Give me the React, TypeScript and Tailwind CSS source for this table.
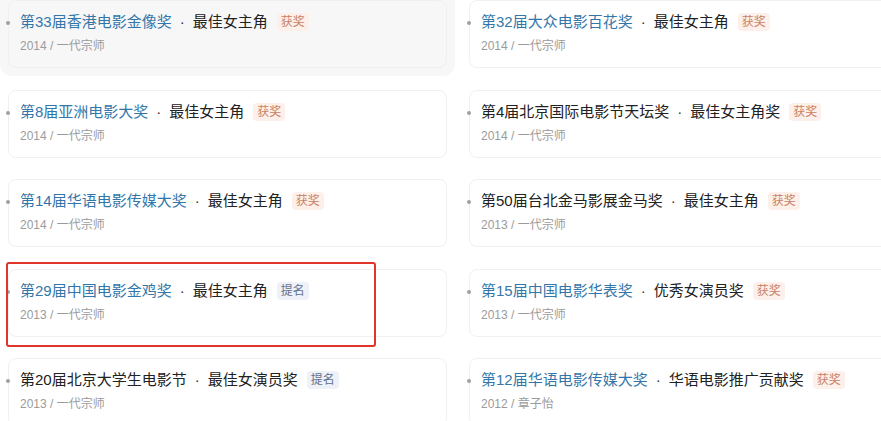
import React from 'react';

type Award = {
  fest: string;
  link: boolean;
  prize: string;
  status: '获奖' | '提名';
  meta: string;
};

const AWARDS: Award[] = [
  { fest: '第33届香港电影金像奖', link: true, prize: '最佳女主角', status: '获奖', meta: '2014 / 一代宗师' },
  { fest: '第32届大众电影百花奖', link: true, prize: '最佳女主角', status: '获奖', meta: '2014 / 一代宗师' },
  { fest: '第8届亚洲电影大奖', link: true, prize: '最佳女主角', status: '获奖', meta: '2014 / 一代宗师' },
  { fest: '第4届北京国际电影节天坛奖', link: false, prize: '最佳女主角奖', status: '获奖', meta: '2014 / 一代宗师' },
  { fest: '第14届华语电影传媒大奖', link: true, prize: '最佳女主角', status: '获奖', meta: '2014 / 一代宗师' },
  { fest: '第50届台北金马影展金马奖', link: false, prize: '最佳女主角', status: '获奖', meta: '2013 / 一代宗师' },
  { fest: '第29届中国电影金鸡奖', link: true, prize: '最佳女主角', status: '提名', meta: '2013 / 一代宗师' },
  { fest: '第15届中国电影华表奖', link: true, prize: '优秀女演员奖', status: '获奖', meta: '2013 / 一代宗师' },
  { fest: '第20届北京大学生电影节', link: false, prize: '最佳女演员奖', status: '提名', meta: '2013 / 一代宗师' },
  { fest: '第12届华语电影传媒大奖', link: true, prize: '华语电影推广贡献奖', status: '获奖', meta: '2012 / 章子怡' },
];

function AwardCard({ award, hovered }: { award: Award; hovered: boolean }) {
  return (
    <div className={`w-[455px] shrink-0 rounded-xl p-2 ${hovered ? 'bg-[#f7f7f7]' : ''}`}>
      <div
        className={`relative h-[68px] rounded-lg border border-[#f0f0f0] pl-[11px] pt-[11px] ${
          hovered ? 'bg-[#f7f7f7]' : 'bg-white'
        }`}
      >
        {/* list bullet */}
        <span className="absolute left-[-3px] top-[20px] h-[4px] w-[4px] rounded-full bg-[#a0a0a0]" />
        <div className="flex items-center whitespace-nowrap text-[15px] leading-5">
          <span className={award.link ? 'text-[#37a]' : 'text-[#222]'}>{award.fest}</span>
          <span className="mx-[8px] font-['Liberation_Sans',sans-serif] text-[#333]">·</span>
          <span className="text-[#222]">{award.prize}</span>
          <span
            className={`ml-[9px] rounded-sm px-[4px] text-[12px] leading-[18px] ${
              award.status === '获奖' ? 'bg-[#fdf0ea] text-[#c98266]' : 'bg-[#eef1f7] text-[#60708e]'
            }`}
          >
            {award.status}
          </span>
        </div>
        <div className="mt-[5px] text-[12px] leading-[18px] text-[#9b9b9b]">{award.meta}</div>
      </div>
    </div>
  );
}

export default function App() {
  return (
    <div
      className="relative h-[421px] w-[881px] overflow-hidden bg-white"
      style={{ fontFamily: '"Liberation Sans", "Noto Sans CJK SC", sans-serif' }}
    >
      <div className="-mt-2 grid w-[916px] grid-cols-[455px_455px] gap-x-[6px] gap-y-[5.5px]">
        {AWARDS.map((a, i) => (
          <AwardCard key={a.fest} award={a} hovered={i === 0} />
        ))}
      </div>

      {/* annotation box */}
      <div className="absolute left-[6px] top-[262px] h-[85px] w-[370px] rounded-[3px] border-2 border-[#e0352b]" />
    </div>
  );
}
